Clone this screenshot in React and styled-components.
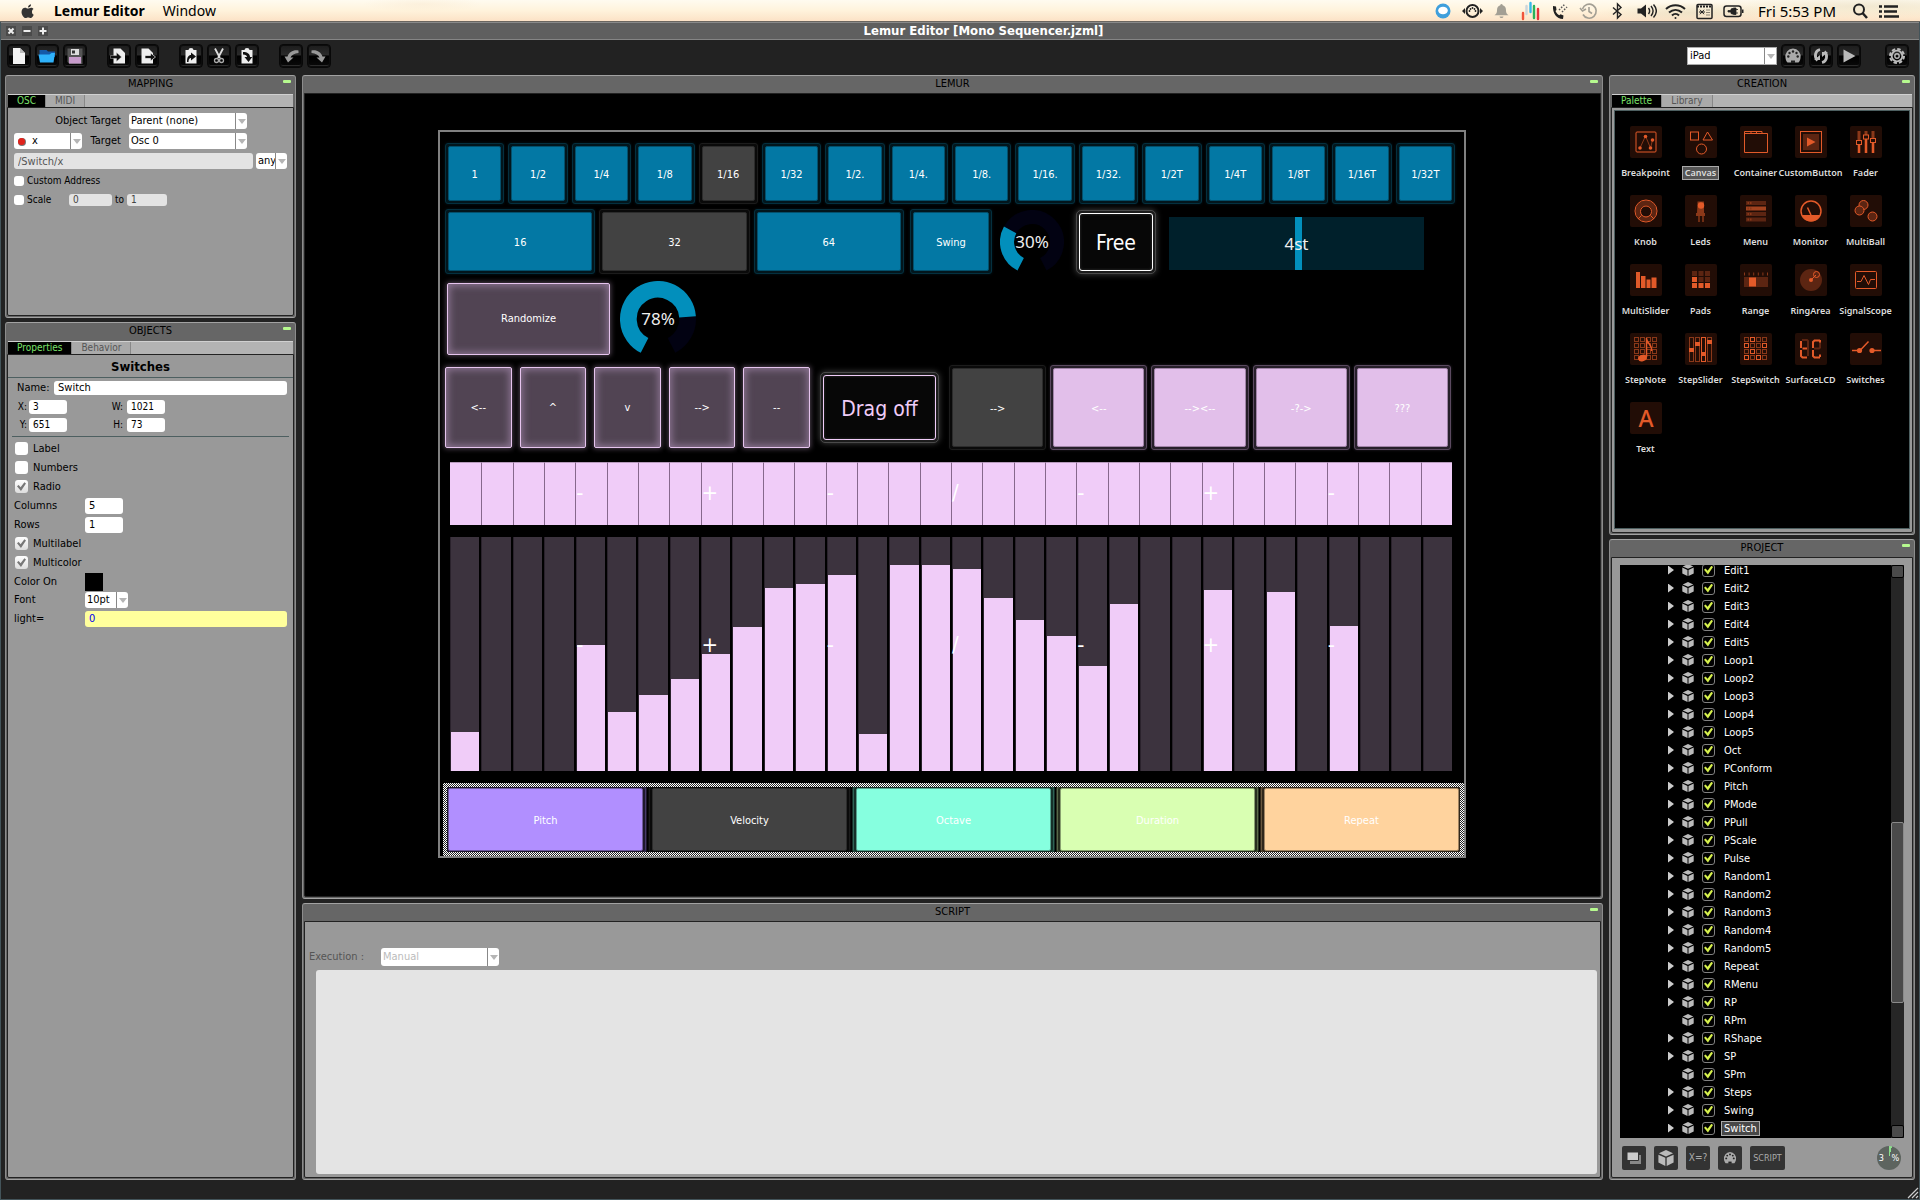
import React from "react";
import styled, { createGlobalStyle, css } from "styled-components";

const UI = `"DejaVu Sans Condensed", "Noto Sans", sans-serif`;
const MENU = `"Noto Sans", "Open Sans", sans-serif`;

const GlobalStyle = createGlobalStyle`
  *, *::before, *::after { box-sizing: border-box; }
  html, body { margin: 0; background: #222; }
  body { font: 11px/14px ${UI}; color: #000; }
  button, input, select, textarea { font: inherit; color: inherit; margin: 0; padding: 0; border: 0; border-radius: 0; background: none; }
`;

/* ---------- desktop shell ---------- */

const Shell = styled.div`
  display: flex;
  flex-direction: column;
  height: 100vh;
  min-height: 1000px;
  min-width: 1680px;
  overflow: hidden;
`;

const MenuBar = styled.header`
  display: flex;
  align-items: center;
  flex: none;
  height: 22px;
  padding: 0 20px;
  border-bottom: 1px solid #6b6660;
  background:
    radial-gradient(ellipse 60px 8px at 22% 20%, #f6e2c455, transparent),
    radial-gradient(ellipse 90px 10px at 88% 60%, #e2d8ba88, transparent),
    radial-gradient(ellipse 160px 12px at 97% 30%, #e6dcc088, transparent),
    linear-gradient(#fffbf0, #fff3dc 50%, #fce2c6);
  font: 14px/20px ${MENU};
`;

const MenuItem = styled.button`
  margin-left: 18px;
  font-weight: ${(p) => (p.$strong ? 700 : 400)};
`;

const StatusArea = styled.div`
  display: flex;
  align-items: center;
  margin-left: auto;
  gap: 8px;
`;

const StatusIcon = styled.svg`
  width: ${(p) => p.$w || 21}px;
  height: 20px;
  display: block;
`;

const Clock = styled.time`
  font: 15px/20px ${MENU};
  padding: 0 6px;
`;

const AppWindow = styled.div`
  display: flex;
  flex-direction: column;
  flex: 1;
  min-height: 0;
  background: #222;
  border: 1px solid #43545a;
  border-top: 0;
`;

const TitleBar = styled.div`
  display: grid;
  grid-template-columns: auto 1fr;
  align-items: center;
  flex: none;
  height: 18px;
  padding: 0 5px;
  background: #5f5f5f;
  border-top: 1px solid #8a8a8a;
  border-bottom: 1px solid #858585;
`;

const WindowTitle = styled.h1`
  margin: 0;
  padding-left: 5px;
  text-align: center;
  font: bold 13px/16px ${UI};
  color: #fff;
`;

const WindowButtons = styled.div`
  display: flex;
  gap: 6px;
`;

const WindowButton = styled.button`
  display: grid;
  place-items: center;
  width: 10px;
  height: 10px;
  background: #4a4a4a;
  svg { width: 8px; height: 8px; display: block; }
`;

const Toolbar = styled.div`
  display: flex;
  align-items: center;
  flex: none;
  gap: 20px;
  height: 35px;
  padding: 0 10px 3px 6px;
`;

const ToolGroup = styled.div`
  display: flex;
  align-items: center;
  gap: 4px;
  ${(p) => p.$end && css`margin-left: auto; margin-right: 4px;`}
`;

const ToolButton = styled.button`
  display: grid;
  place-items: center;
  width: 24px;
  height: 24px;
  border-radius: 4px;
  border: 1px solid #080808;
  background: linear-gradient(#1c1c1c, #2a2a2a 45%, #000 50%, #0a0a0a);
  box-shadow: inset 0 0 0 1px #0c0c0c, inset 0 -2px 0 #2c2c2c;
  svg { width: 20px; height: 20px; display: block; }
`;

const Workspace = styled.main`
  display: grid;
  grid-template-columns: 291px minmax(0, 1fr) 306px;
  gap: 6px;
  flex: 1;
  min-height: 0;
  padding: 0 4px 0 4px;
`;

const Column = styled.div`
  display: flex;
  flex-direction: column;
  gap: 4px;
  min-height: 0;
`;

const Footer = styled.footer`
  display: flex;
  justify-content: flex-end;
  align-items: flex-end;
  flex: none;
  height: 19px;
  svg { width: 12px; height: 12px; display: block; }
`;

/* ---------- panels ---------- */

const PanelBox = styled.section`
  display: flex;
  flex-direction: column;
  flex: ${(p) => (p.$height ? `0 0 ${p.$height}px` : "1")};
  min-height: 0;
  padding: 0 1px 1px;
  background: #666;
  border: 1px solid #8c8c8c;
  border-top-color: #a2a2a2;
  border-bottom-color: #a2a2a2;
  border-radius: 3px;
`;

const PanelHead = styled.div`
  display: grid;
  grid-template-columns: 1fr auto 1fr;
  flex: none;
  height: 17px;
  line-height: 15px;
  padding: 0 3px;
`;

const PanelTitle = styled.h2`
  grid-column: 2;
  margin: 0;
  font: 11px/16px ${UI};
`;

const Minimize = styled.button`
  justify-self: end;
  width: 8px;
  height: 3px;
  margin-top: 4px;
  border-radius: 1px;
  background: #b6f98f;
`;

const PanelBody = styled.div`
  display: flex;
  flex-direction: column;
  flex: 1;
  min-height: 0;
  background: ${(p) => p.$bg || "#999"};
  border: 1px solid #222;
  border-radius: 0 0 2px 2px;
  padding: ${(p) => p.$pad || 0};
`;

const TabStrip = styled.div`
  display: flex;
  flex: none;
  height: 13px;
  margin: 1px 1px 0;
  background: #b3b3b3;
  border-top: 1px solid #d0d0d0;
`;

const Tab = styled.button`
  padding: 0 9px;
  font-size: 10px;
  line-height: 12px;
  border-right: 1px solid #888;
  ${(p) =>
    p.$on
      ? css`background: #000; color: #7be06a;`
      : css`background: #aaa; color: #555;`}
`;

function Panel({ title, tabs, height, bg, pad, children }) {
  return (
    <PanelBox $height={height} aria-label={title}>
      <PanelHead>
        <PanelTitle>{title}</PanelTitle>
        <Minimize aria-label={`Minimize ${title}`} />
      </PanelHead>
      {tabs && (
        <TabStrip role="tablist">
          {tabs.map((t, i) => (
            <Tab key={t} role="tab" aria-selected={i === 0} $on={i === 0}>{t}</Tab>
          ))}
        </TabStrip>
      )}
      <PanelBody $bg={bg} $pad={pad}>{children}</PanelBody>
    </PanelBox>
  );
}

/* ---------- form parts ---------- */

const Row = styled.div`
  display: flex;
  align-items: center;
  flex: none;
  height: ${(p) => p.$h || 19}px;
`;

const Spacer = styled.span`
  flex: 0 0 ${(p) => p.$w}px;
`;

const Caption = styled.label`
  flex: none;
  width: ${(p) => (p.$w ? `${p.$w}px` : "auto")};
  padding: 0 ${(p) => p.$padX || 0}px;
  text-align: ${(p) => (p.$right ? "right" : "left")};
  color: ${(p) => p.$color || "inherit"};
  font-size: ${(p) => (p.$small ? 10 : 11)}px;
`;

const TextBox = styled.input`
  flex: ${(p) => (p.$w ? `0 0 ${p.$w}px` : "1")};
  min-width: 0;
  width: ${(p) => (p.$w ? `${p.$w}px` : "auto")};
  height: ${(p) => p.$h || 16}px;
  padding: 0 4px;
  border-radius: 3px;
  background: ${(p) => p.$bg || "#fff"};
  color: ${(p) => p.$color || "#000"};
  font-size: ${(p) => (p.$small ? 10 : 11)}px;
`;

const SelectWrap = styled.span`
  display: flex;
  flex: none;
  width: ${(p) => p.$w}px;
  height: ${(p) => p.$h || 16}px;
  border-radius: ${(p) => (p.$square ? 0 : 3)}px;
  border: ${(p) => (p.$square ? "1px solid #aaa" : "0")};
  background: #fff;
  overflow: hidden;
  align-items: center;
  > svg { width: 10px; height: 10px; margin: 0 4px 0 2px; flex: none; }
  select {
    flex: 1;
    min-width: 0;
    height: 100%;
    padding-left: 2px;
    appearance: none;
    outline: 0;
    color: ${(p) => p.$color || "#000"};
    opacity: 1;
  }
`;

const SelectArrow = styled.span`
  display: grid;
  place-items: center;
  flex: none;
  width: 12px;
  height: 100%;
  border-left: 1px solid #888;
  &::before {
    content: "";
    border: 4px solid transparent;
    border-top: 5px solid #b5b5b5;
    border-bottom: 0;
  }
`;

function Select({ id, value, icon, label, disabled, ...rest }) {
  return (
    <SelectWrap {...rest}>
      {icon}
      <select id={id} aria-label={label} defaultValue={value} disabled={disabled}>
        <option>{value}</option>
      </select>
      <SelectArrow />
    </SelectWrap>
  );
}

const Check = styled.input.attrs({ type: "checkbox" })`
  appearance: none;
  flex: none;
  display: grid;
  place-items: center;
  width: ${(p) => p.$size || 13}px;
  height: ${(p) => p.$size || 13}px;
  border-radius: 3px;
  background: ${(p) => (p.$dark ? "#000" : "#fff")};
  border: ${(p) => (p.$dark ? "1px solid #808080" : "0")};
  &:checked {
    background: ${(p) => (p.$dark ? "#000" : "linear-gradient(#fff, #ddd)")};
  }
  &:checked::before {
    content: "";
    width: 9px;
    height: 9px;
    background: ${(p) => (p.$dark ? "#d6f04c" : "#777")};
    clip-path: polygon(0 48%, 18% 34%, 40% 58%, 82% 4%, 100% 16%, 44% 100%);
  }
`;

/* ---------- mapping / objects ---------- */

const MappingForm = styled.form`
  display: flex;
  flex-direction: column;
  padding: 3px 6px;
`;

const ObjectsForm = styled.form`
  display: flex;
  flex-direction: column;
`;

const ObjectName = styled.h3`
  margin: 0;
  padding-right: 20px;
  height: 23px;
  text-align: center;
  font: bold 13px/23px ${UI};
  border-bottom: 1px solid #4d5f60;
`;

const Fields = styled.div`
  padding: 0 6px;
`;

const Divider = styled.hr`
  margin: 2px 4px 2px;
  border: 0;
  height: 1px;
  background: #4d5f60;
`;

const Swatch = styled.button`
  width: 18px;
  height: 18px;
  background: #000;
`;

function Mapping() {
  return (
    <Panel title="MAPPING" tabs={["OSC", "MIDI"]} height={243}>
      <MappingForm>
        <Row $h={20}>
          <Caption htmlFor="objTarget" $w={115} $padX={8} $right>Object Target</Caption>
          <Select id="objTarget" value="Parent (none)" $w={118} />
        </Row>
        <Row $h={20}>
          <Select
            label="Variable"
            value="x"
            $w={68}
            icon={<svg viewBox="0 0 10 10"><circle cx="6" cy="6" r="4" fill="#777" /><circle cx="5.500" cy="5.500" r="3.500" fill="#e0231c" /></svg>}
          />
          <Caption htmlFor="oscTarget" $w={47} $padX={8} $right>Target</Caption>
          <Select id="oscTarget" value="Osc 0" $w={118} />
        </Row>
        <Row $h={20}>
          <TextBox aria-label="OSC address" defaultValue="/Switch/x" $bg="#e3e3e3" $color="#555" />
          <Spacer $w={3} />
          <Select label="Trigger" value="any" $w={31} />
        </Row>
        <Row>
          <Check id="custom" $size={10} />
          <Caption htmlFor="custom" $small $padX={3}>Custom Address</Caption>
        </Row>
        <Row>
          <Check id="scale" $size={10} />
          <Caption htmlFor="scale" $small $w={45} $padX={3}>Scale</Caption>
          <TextBox aria-label="Scale from" defaultValue="0" $w={43} $h={12} $small $bg="#e3e3e3" $color="#444" />
          <Caption htmlFor="scaleTo" $small $padX={3}>to</Caption>
          <TextBox id="scaleTo" defaultValue="1" $w={40} $h={12} $small $bg="#e3e3e3" $color="#444" />
        </Row>
      </MappingForm>
    </Panel>
  );
}

function CheckRow({ label, on }) {
  const id = `p-${label}`;
  return (
    <Row>
      <Spacer $w={1} />
      <Check id={id} defaultChecked={on} />
      <Caption htmlFor={id} $padX={5}>{label}</Caption>
    </Row>
  );
}

function Objects() {
  return (
    <Panel title="OBJECTS" tabs={["Properties", "Behavior"]}>
      <ObjectsForm>
        <ObjectName>Switches</ObjectName>
        <Fields>
          <Row $h={20}>
            <Caption htmlFor="name" $w={40} $padX={3}>Name:</Caption>
            <TextBox id="name" defaultValue="Switch" $h={14} />
          </Row>
          <Row $h={18}>
            <Caption htmlFor="px" $w={15} $padX={2} $right $small>X:</Caption>
            <TextBox id="px" defaultValue="3" $w={38} $h={14} $small />
            <Caption htmlFor="pw" $w={60} $padX={4} $right $small>W:</Caption>
            <TextBox id="pw" defaultValue="1021" $w={38} $h={14} $small />
          </Row>
          <Row $h={18}>
            <Caption htmlFor="py" $w={15} $padX={2} $right $small>Y:</Caption>
            <TextBox id="py" defaultValue="651" $w={38} $h={14} $small />
            <Caption htmlFor="ph" $w={60} $padX={4} $right $small>H:</Caption>
            <TextBox id="ph" defaultValue="73" $w={38} $h={14} $small />
          </Row>
        </Fields>
        <Divider />
        <Fields>
          <CheckRow label="Label" />
          <CheckRow label="Numbers" />
          <CheckRow label="Radio" on />
          <Row>
            <Caption htmlFor="cols" $w={71}>Columns</Caption>
            <TextBox id="cols" defaultValue="5" $w={38} />
          </Row>
          <Row>
            <Caption htmlFor="rows" $w={71}>Rows</Caption>
            <TextBox id="rows" defaultValue="1" $w={38} />
          </Row>
          <CheckRow label="Multilabel" on />
          <CheckRow label="Multicolor" on />
          <Row>
            <Caption htmlFor="color" $w={71}>Color On</Caption>
            <Swatch id="color" type="button" />
          </Row>
          <Row $h={18}>
            <Caption htmlFor="font" $w={71}>Font</Caption>
            <Select id="font" value="10pt" $w={43} />
          </Row>
          <Row>
            <Caption htmlFor="light" $w={71}>light=</Caption>
            <TextBox id="light" defaultValue="0" $bg="#ffff9c" $color="#00e" />
          </Row>
        </Fields>
      </ObjectsForm>
    </Panel>
  );
}

/* ---------- surface ---------- */

const Stage = styled.div`
  display: grid;
  place-content: center;
  flex: 1;
  padding: 0 1px 2px 0;
`;

const Surface = styled.div`
  display: flex;
  flex-direction: column;
  width: 1028px;
  height: 728px;
  padding-top: 11px;
  border: 2px solid #808080;
  background: #000;
  color: #fff;
`;

const Line = styled.div`
  display: flex;
  align-items: center;
  flex: none;
  height: ${(p) => p.$h}px;
  margin: 0 ${(p) => p.$right || 0}px ${(p) => p.$below}px 5px;
`;

const PadRow = styled.div`
  display: grid;
  grid-auto-flow: column;
  grid-auto-columns: minmax(0, 1fr);
  gap: ${(p) => p.$gap || 4}px;
  flex: ${(p) => (p.$w ? `0 0 ${p.$w}px` : 1)};
  height: ${(p) => (p.$h ? `${p.$h}px` : "100%")};
  margin: 0 ${(p) => p.$after || 0}px 0 ${(p) => p.$before || 0}px;
`;

const tones = {
  blue: ["#0378a4", "#04506c", "#02161d", "#04303f"],
  gray: ["#424242", "#2c2c2c", "#0a0a0a", "#1c1c1c"],
  pink: ["#e2bfea", "#a184a8", "#271f2a", "#5b4a60"],
  violet: ["#b18fff", "#6f5a9f", "#1f182e", "#46396a"],
  aqua: ["#86ffdf", "#54a08c", "#163029", "#2f6355"],
  lime: ["#d9ffb2", "#88a06f", "#283020", "#59694a"],
  peach: ["#ffd39e", "#a08463", "#30271b", "#69573f"],
};

const Pad = styled.button`
  border-radius: 3px;
  border: 1px solid ${(p) => tones[p.$tone][3]};
  padding: 2px;
  background: ${(p) => tones[p.$tone][2]};
  box-shadow: 0 0 3px ${(p) => tones[p.$tone][2]};
  > span {
    display: grid;
    place-items: center;
    height: 100%;
    padding-top: 2px;
    border: 1px solid ${(p) => tones[p.$tone][1]};
    border-radius: 2px;
    background: ${(p) => tones[p.$tone][0]};
  }
`;

const GlowPad = styled.button`
  border: 1px solid #e6c4ee;
  border-radius: 2px;
  background: #514453;
  box-shadow: 0 0 5px 1px #4d404f, inset 0 0 7px 2px #8a7390;
`;

const Outline = styled.button`
  flex: 0 0 ${(p) => p.$w}px;
  height: ${(p) => p.$h}px;
  margin-right: ${(p) => p.$after || 0}px;
  padding: 2px;
  border: 1px solid #4a4a4a;
  border-radius: 5px;
  background: #1c1c1c;
  box-shadow: 0 0 6px #444;
  color: ${(p) => p.$color};
  font-size: 21px;
  > span {
    display: grid;
    place-items: center;
    height: 100%;
    padding-top: 2px;
    border: 1px solid currentColor;
    border-radius: 3px;
    background: #070707;
    box-shadow: inset 0 0 3px #333;
  }
`;

const readout = css`
  font: 17px/20px "Noto Sans", sans-serif;
  color: #eee;
`;

const KnobBox = styled.div`
  display: grid;
  place-items: center;
  flex: 0 0 ${(p) => p.$size}px;
  height: ${(p) => p.$size}px;
  margin-right: ${(p) => p.$after || 0}px;
  > * { grid-area: 1 / 1; }
  output { ${readout} }
`;

function Knob({ size, value, after }) {
  const r = 39;
  const at = (deg) => {
    const a = ((deg + 90) * Math.PI) / 180;
    return [50 + r * Math.cos(a), 50 + r * Math.sin(a)];
  };
  const arc = (from, to) => {
    const [x1, y1] = at(from);
    const [x2, y2] = at(to);
    return `M${x1} ${y1}A${r} ${r} 0 ${to - from > 180 ? 1 : 0} 1 ${x2} ${y2}`;
  };
  const end = 27 + 306 * (value / 100);
  return (
    <KnobBox $size={size} $after={after}>
      <svg width={size} height={size} viewBox="0 0 100 100" fill="none" strokeWidth="22">
        <path d={arc(end, 333)} stroke="#020212" />
        <path d={arc(27, end)} stroke="#028fbc" />
      </svg>
      <output>{value}%</output>
    </KnobBox>
  );
}

const SliderBox = styled.div`
  display: grid;
  place-items: center;
  flex: 0 0 255px;
  height: 53px;
  margin-top: 4px;
  background: #00202b;
  > * { grid-area: 1 / 1; }
  input {
    appearance: none;
    width: 100%;
    height: 100%;
  }
  input::-webkit-slider-thumb {
    appearance: none;
    width: 7px;
    height: 53px;
    background: #028fbc;
  }
  output { ${readout} pointer-events: none; z-index: 1; }
`;

const Stack = styled.div`
  display: grid;
  flex: none;
  height: ${(p) => p.$h}px;
  margin: 0 12px 12px 10px;
  > * { grid-area: 1 / 1; min-height: 0; }
`;

const Steps = styled.div`
  display: grid;
  grid-template-columns: repeat(32, minmax(0, 1fr));
  column-gap: ${(p) => p.$gap || 0}px;
`;

const MarkLayer = styled(Steps)`
  pointer-events: none;
  padding-bottom: ${(p) => p.$lift}px;
`;

const StepCell = styled.button`
  background: #f0ccf8;
  border-top: 1px solid #b79bbd;
  & + & { border-left: 1px solid #86688c; }
`;

const StepBar = styled.input.attrs({ type: "range", min: 0, max: 234 })`
  appearance: none;
  writing-mode: vertical-lr;
  direction: rtl;
  width: 100%;
  height: 100%;
  border-left: 1px solid #2a222c;
  background: linear-gradient(to top, #f0ccf8 var(--level), #3c333e var(--level));
  &::-webkit-slider-thumb { appearance: none; width: 1px; height: 1px; background: transparent; }
`;

const Mark = styled.span`
  align-self: center;
  padding-left: 1px;
  font-size: 22px;
  line-height: 24px;
`;

const marks = { 4: "-", 8: "+", 12: "-", 16: "/", 20: "-", 24: "+", 28: "-" };
const levels = [39, 0, 0, 0, 126, 59, 76, 92, 117, 144, 183, 187, 196, 37, 206, 206, 202, 173, 151, 135, 105, 167, 0, 0, 181, 0, 179, 0, 145, 0, 0, 0];

const Marks = ({ lift }) => (
  <MarkLayer $lift={lift}>
    {levels.map((_, i) => <Mark key={i}>{marks[i]}</Mark>)}
  </MarkLayer>
);

const Selection = styled.div`
  flex: none;
  height: 73px;
  margin-left: 3px;
  padding: 4px;
  background: repeating-conic-gradient(#fff 0 25%, #222 0 50%) 0 0 / 2px 2px;
`;

const ModeRow = styled.div`
  display: grid;
  grid-template-columns: repeat(5, minmax(0, 1fr));
  gap: 9px;
  height: 100%;
  padding: 1px 1px;
  background: #000;
  overflow: hidden;
`;

const ModePad = styled.button`
  padding-top: 2px;
  border: 1px solid ${(p) => tones[p.$tone][1]};
  border-radius: 2px;
  background: ${(p) => tones[p.$tone][0]};
  box-shadow: 0 0 0 2px ${(p) => tones[p.$tone][2]}, 0 0 0 3px ${(p) => tones[p.$tone][3]}, 0 0 0 4px ${(p) => tones[p.$tone][2]};
`;

const rates = ["1", "1/2", "1/4", "1/8", "1/16", "1/32", "1/2.", "1/4.", "1/8.", "1/16.", "1/32.", "1/2T", "1/4T", "1/8T", "1/16T", "1/32T"];

function PadButton({ tone, children }) {
  return <Pad $tone={tone}><span>{children}</span></Pad>;
}

function Lemur() {
  return (
    <Panel title="LEMUR" bg="#000">
      <Stage>
        <Surface>
          <Line $h={61} $below={5} $right={9}>
            <PadRow>
              {rates.map((r) => <PadButton key={r} tone={r === "1/16" ? "gray" : "blue"}>{r}</PadButton>)}
            </PadRow>
          </Line>
          <Line $h={65} $below={7}>
            <PadRow $w={459} $after={6}>
              {["16", "32", "64"].map((r) => <PadButton key={r} tone={r === "32" ? "gray" : "blue"}>{r}</PadButton>)}
            </PadRow>
            <PadRow $w={82} $after={8}><PadButton tone="blue">Swing</PadButton></PadRow>
            <Knob size={64} value={30} after={12} />
            <Outline $w={80} $h={64} $after={13} $color="#fff"><span>Free</span></Outline>
            <SliderBox>
              <input type="range" aria-label="Steps" defaultValue={51} />
              <output>4st</output>
            </SliderBox>
          </Line>
          <Line $h={76} $below={8}>
            <PadRow $w={163} $h={72} $before={2} $after={10}><GlowPad>Randomize</GlowPad></PadRow>
            <Knob size={76} value={78} />
          </Line>
          <Line $h={85} $below={12}>
            <PadRow $w={365} $h={81} $gap={8} $after={10}>
              {["<--", "^", "v", "-->", "--"].map((t) => <GlowPad key={t}>{t}</GlowPad>)}
            </PadRow>
            <Outline $w={119} $h={71} $after={10} $color="#f0ccf8"><span>Drag off</span></Outline>
            <PadRow $w={502}>
              {["-->", "<--", "--><--", "-?->", "???"].map((t, i) => <PadButton key={t} tone={i ? "pink" : "gray"}>{t}</PadButton>)}
            </PadRow>
          </Line>
          <Stack $h={63}>
            <Steps>{levels.map((_, i) => <StepCell key={i} aria-label={`Step ${i + 1}`} />)}</Steps>
            <Marks lift={2} />
          </Stack>
          <Stack $h={234}>
            <Steps $gap={2}>
              {levels.map((v, i) => <StepBar key={i} aria-label={`Value ${i + 1}`} defaultValue={v} style={{ "--level": `${v}px` }} />)}
            </Steps>
            <Marks lift={18} />
          </Stack>
          <Selection>
            <ModeRow>
              <ModePad $tone="violet">Pitch</ModePad>
              <ModePad $tone="gray">Velocity</ModePad>
              <ModePad $tone="aqua">Octave</ModePad>
              <ModePad $tone="lime">Duration</ModePad>
              <ModePad $tone="peach">Repeat</ModePad>
            </ModeRow>
          </Selection>
        </Surface>
      </Stage>
    </Panel>
  );
}

/* ---------- script ---------- */

const ScriptArea = styled.textarea`
  flex: 1;
  margin: 4px 3px 3px 11px;
  border-radius: 3px;
  background: #e4e4e4;
  resize: none;
`;

function Script() {
  return (
    <Panel title="SCRIPT" height={277} pad="26px 0 0 0">
      <Row $h={18}>
        <Caption htmlFor="exec" $w={76} $padX={4} $color="#555">Execution :</Caption>
        <Select id="exec" value="Manual" disabled $w={118} $h={18} $color="#bbb" />
      </Row>
      <ScriptArea aria-label="Script" />
    </Panel>
  );
}

/* ---------- creation ---------- */

const PaletteBox = styled.div`
  display: grid;
  grid-template-columns: repeat(auto-fill, 55px);
  grid-auto-rows: 69px;
  align-content: start;
  flex: 1;
  padding: 15px 0 0 3px;
  background: #000;
  border: 1px solid #4d5f60;
`;

const PaletteItem = styled.button`
  display: flex;
  flex-direction: column;
  align-items: center;
  gap: 8px;
  > svg { width: 32px; height: 32px; flex: none; border-radius: 2px; background: #220d06; }
`;

const PaletteLabel = styled.span`
  height: 14px;
  padding: 0 2px;
  font: 600 9px/12px "Noto Sans", "Open Sans", sans-serif;
  color: #ddd;
  white-space: nowrap;
  border: 1px solid ${(p) => (p.$on ? "#aaa" : "transparent")};
  background: ${(p) => (p.$on ? "#555" : "transparent")};
`;

const O = "#e35a29";
const D = "#5c2512";
const M = "#8a3819";
const grid4 = [0, 1, 2, 3].flatMap((y) => [0, 1, 2, 3].map((x) => [x, y]));
const litSteps = ["1,0", "0,1", "3,1", "1,2", "0,3", "2,3"];

const paletteIcons = {
  Breakpoint: <><rect x="6" y="6" width="20" height="20" rx="1" stroke={O} /><path d="M10 22 15.500 10 20.500 22 22.500 14" stroke={M} /><g fill={O}><circle cx="10" cy="22" r="1.800" /><circle cx="15.500" cy="10.500" r="1.800" /><circle cx="20.500" cy="22" r="1.800" /><circle cx="22.500" cy="14" r="1.800" /></g></>,
  Canvas: <g stroke={O}><rect x="5.500" y="6" width="8" height="8" /><path d="M22.500 6 27.500 14H18z" /><circle cx="16.500" cy="23" r="5" /></g>,
  Container: <path d="M4.500 26.500V5.500H22V7.500H27.500V26.500zM4.500 7.500H11V5.500M16.500 5.500V7.500M11 7.500H22" stroke={O} />,
  CustomButton: <><rect x="5.500" y="5.500" width="21" height="21" stroke={O} /><rect x="8" y="8" width="16" height="16" fill={D} /><path d="M12 11.500 20.500 16 12 20.500z" fill={O} /></>,
  Fader: <><path d="M9 5V27M16 5V27M23 5V27" stroke={M} strokeWidth="3" /><path d="M9 19V27M16 13V27M23 17V27" stroke={O} strokeWidth="2" /><g stroke={O} fill="#220d06"><rect x="6.500" y="14.500" width="5" height="4" /><rect x="13.500" y="9" width="5" height="4" /><rect x="20.500" y="12.500" width="5" height="4" /></g></>,
  Knob: <g stroke={O}><circle cx="16" cy="16" r="8" stroke={D} strokeWidth="5" /><circle cx="16" cy="16" r="11" /><circle cx="16" cy="16.500" r="5.500" /><path d="M11.500 20.500 8 24M20.500 20.500 24 24" /></g>,
  Leds: <><path d="M12.500 6.500h6.500v12h-7zM11 18h9v3h-9z" fill={M} /><circle cx="16" cy="10.500" r="3.200" fill={O} /><path d="M14 19V27M18 19V27" stroke={M} strokeWidth="1.500" /></>,
  Menu: <><g fill={D}><rect x="6" y="6" width="20" height="4" /><rect x="6" y="17" width="20" height="4" /><rect x="6" y="22.500" width="20" height="4" /></g><rect x="6" y="11.500" width="20" height="4" fill="#a2431f" /><path d="M7.500 8h4M7.500 13.500h4M7.500 19h4M7.500 24.500h4" stroke={M} strokeDasharray="1.500 1" strokeWidth="2" /></>,
  Monitor: <><circle cx="16" cy="16" r="10" stroke={O} strokeWidth="1.500" /><path d="M6.500 20H25.500A10.300 10.300 0 0 1 6.500 20z" fill={O} /><path d="M16 20 12.500 12.500" stroke={O} strokeWidth="1.500" /></>,
  MultiBall: <g stroke={O} fill={D}><circle cx="13.500" cy="10" r="4.500" /><circle cx="9.500" cy="15.500" r="4.500" /><circle cx="22.500" cy="21.500" r="4.500" /></g>,
  MultiSlider: <path d="M6 8h4v16H6zM11 12h4.500v12H11zM16.500 15.500h4V24h-4zM21.500 13.500h5V24h-5z" fill={O} />,
  Pads: <>{[0, 1, 2].flatMap((y) => [0, 1, 2].map((x) => <rect key={`${x}${y}`} x={7 + x * 6.5} y={7 + y * 6} width="5" height="5" fill={y === 2 || (y === 1 && x === 0) ? O : D} />))}</>,
  Range: <><rect x="4" y="13" width="24" height="10" fill={D} /><rect x="9" y="13.500" width="7" height="9" fill={O} /><path d="M4 10H28" stroke={M} strokeWidth="3" strokeDasharray="1 3.600" /></>,
  RingArea: <><circle cx="16" cy="16" r="11" fill={D} /><circle cx="21.500" cy="10.500" r="3" stroke={O} /><path d="M16 16 21 11" stroke={O} /><circle cx="16" cy="16" r="2" fill={O} /></>,
  SignalScope: <g stroke={O}><rect x="5.500" y="7.500" width="21" height="17" rx="1" /><path d="M7 17.500h4l3-6 4.500 9 2-5h4.500" /></g>,
  StepNote: <><g stroke={M}>{grid4.map(([x, y]) => <rect key={`${x}${y}`} x={4.5 + x * 6} y={4.5 + y * 6} width="4" height="4" />)}</g><path d="M16.500 5V24M16.500 6c1 5 6 6 5 12" stroke={O} strokeWidth="1.500" /><ellipse cx="12.500" cy="25" rx="4.500" ry="3.300" fill={O} transform="rotate(-20 12.500 25)" /></>,
  StepSlider: <><g stroke={M}><rect x="4.500" y="4.500" width="4" height="24" /><rect x="10.500" y="4.500" width="4" height="24" /><rect x="16.500" y="4.500" width="4" height="24" stroke={O} /><rect x="22.500" y="4.500" width="4" height="24" /></g><path d="M4 15h5v4H4zM10 9h5v4h-5zM16 19h5v4h-5zM22 7h5v4h-5z" fill={O} /></>,
  StepSwitch: <>{grid4.map(([x, y]) => <rect key={`${x}${y}`} x={4.5 + x * 6} y={4.5 + y * 6} width="4" height="4" stroke={litSteps.includes(`${x},${y}`) ? O : M} />)}</>,
  SurfaceLCD: <><path d="M7 7h5l1 1v15M19 15.500h5l1-1V8" stroke={D} strokeWidth="2" /><path d="M6 8V15M6 17V23l1.500 1.500H12M7.500 15.500H12M25 7.500H19.500L18 9V15M18 17V23l1.500 1.500H25M25 21.500V24M25 7V9.500" stroke={O} strokeWidth="2" /></>,
  Switches: <><path d="M2 17.500H10L18.500 8.500M22 17.500H31" stroke={O} strokeWidth="1.500" /><circle cx="9.500" cy="17.500" r="2.600" fill={O} /><circle cx="22" cy="17.500" r="2.600" fill={O} /></>,
  Text: <text x="16" y="25" textAnchor="middle" fontFamily="Noto Sans, sans-serif" fontSize="23" fontWeight="500" fill={O}>A</text>,
};

function Creation() {
  return (
    <Panel title="CREATION" tabs={["Palette", "Library"]} height={460} pad="2px 2px 3px">
      <PaletteBox>
        {Object.entries(paletteIcons).map(([name, art]) => (
          <PaletteItem key={name}>
            <svg viewBox="0 0 32 32" fill="none" aria-hidden="true">{art}</svg>
            <PaletteLabel $on={name === "Canvas"}>{name}</PaletteLabel>
          </PaletteItem>
        ))}
      </PaletteBox>
    </Panel>
  );
}

/* ---------- project ---------- */

const TreeFrame = styled.div`
  display: flex;
  flex: 1;
  min-height: 0;
  background: #000;
`;

const Tree = styled.ul`
  display: flex;
  flex-direction: column;
  justify-content: flex-end;
  flex: 1;
  min-height: 0;
  margin: 0;
  padding: 0 0 1px 48px;
  list-style: none;
  overflow: hidden;
  color: #fff;
`;

const TreeRow = styled.li`
  display: grid;
  grid-template-columns: 6px 12px 14px auto;
  column-gap: 8px;
  align-items: center;
  justify-content: start;
  flex: none;
  height: 18px;
`;

const Twisty = styled.button`
  width: 6px;
  height: 9px;
  background: #ccc;
  clip-path: polygon(0 0, 100% 50%, 0 100%);
  visibility: ${(p) => (p.$hide ? "hidden" : "visible")};
`;

const TreeLabel = styled.label`
  padding: 0 2px;
  margin-left: -3px;
  line-height: 13px;
  border: 1px solid ${(p) => (p.$on ? "#aaa" : "transparent")};
  background: ${(p) => (p.$on ? "#484848" : "transparent")};
`;

const ScrollTrack = styled.div`
  display: flex;
  flex-direction: column;
  width: 13px;
  background: #262626;
`;

const ScrollEnd = styled.button`
  flex: none;
  height: 13px;
  border: 1px solid #000;
  border-radius: 2px;
  background: #4a4a4a;
`;

const ScrollThumb = styled.div`
  flex: 180;
  border: 1px solid #8a8a8a;
  border-radius: 2px;
  background: #4a4a4a;
`;

const ScrollSpace = styled.div`
  flex: ${(p) => p.$n};
`;

const ProjectBar = styled.div`
  display: flex;
  align-items: center;
  gap: 8px;
  flex: none;
  height: 39px;
  padding: 1px 3px 0 2px;
`;

const ProjectButton = styled.button`
  display: grid;
  place-items: center;
  width: ${(p) => p.$w || 24}px;
  height: 24px;
  border-radius: 2px;
  background: #333;
  color: #aaa;
  font-size: ${(p) => (p.$w ? 9 : 10)}px;
  svg { width: 16px; height: 16px; }
`;

const Load = styled.div`
  display: grid;
  place-items: center;
  margin-left: auto;
  width: 24px;
  height: 24px;
  border-radius: 50%;
  background: conic-gradient(#8be08b 0 4%, #5d645f 4%);
  color: #fff;
  font-size: 9px;
  white-space: pre;
`;

const CubeIcon = () => (
  <svg viewBox="0 0 12 12" width="12" height="12" fill="#bbb" aria-hidden="true">
    <path d="M6 0 11.300 2.400 6 4.800.7 2.400zM.3 3.500 5.500 5.900V12L.3 9.400zM11.700 3.500 6.500 5.900V12L11.700 9.400z" />
  </svg>
);

const MidiShape = ({ c }) => (
  <>
    <path d="M10 2.500a8 8 0 0 1 7.500 9.500c-.3 2-1 3.500-2 4.500H4.500c-1-1-1.700-2.500-2-4.500A8 8 0 0 1 10 2.500z" fill={c} />
    <g fill="#222"><circle cx="5.300" cy="10.500" r="1.200" /><circle cx="6.500" cy="7" r="1.200" /><circle cx="10" cy="5.500" r="1.200" /><circle cx="13.500" cy="7" r="1.200" /><circle cx="14.700" cy="10.500" r="1.200" /><rect x="8" y="14.500" width="4" height="2.500" /></g>
  </>
);

const tree = ["Edit1", "Edit2", "Edit3", "Edit4", "Edit5", "Loop1", "Loop2", "Loop3", "Loop4", "Loop5", "Oct", "PConform", "Pitch", "PMode", "PPull", "PScale", "Pulse", "Random1", "Random2", "Random3", "Random4", "Random5", "Repeat", "RMenu", "RP", "RPm", "RShape", "SP", "SPm", "Steps", "Swing", "Switch"];

function Project() {
  return (
    <Panel title="PROJECT" pad="7px 8px 0">
      <TreeFrame>
        <Tree>
          {tree.map((n) => (
            <TreeRow key={n}>
              <Twisty $hide={n === "RPm" || n === "SPm"} aria-label={`Expand ${n}`} />
              <CubeIcon />
              <Check id={`t-${n}`} $dark defaultChecked />
              <TreeLabel htmlFor={`t-${n}`} $on={n === "Switch"}>{n}</TreeLabel>
            </TreeRow>
          ))}
        </Tree>
        <ScrollTrack>
          <ScrollEnd aria-label="Scroll up" />
          <ScrollSpace $n={244} />
          <ScrollThumb />
          <ScrollSpace $n={122} />
          <ScrollEnd aria-label="Scroll down" />
        </ScrollTrack>
      </TreeFrame>
      <ProjectBar>
        <ProjectButton aria-label="Create container">
          <svg viewBox="0 0 16 16"><path d="M4 5h11v9H4z" fill="#888" /><path d="M1 2h11.500v8.500H1z" fill="#ccc" stroke="#333" /></svg>
        </ProjectButton>
        <ProjectButton aria-label="Create object"><CubeIcon /></ProjectButton>
        <ProjectButton>X=?</ProjectButton>
        <ProjectButton aria-label="MIDI"><svg viewBox="0 0 20 20"><MidiShape c="#aaa" /></svg></ProjectButton>
        <ProjectButton $w={35}>SCRIPT</ProjectButton>
        <Load>{"3   %"}</Load>
      </ProjectBar>
    </Panel>
  );
}

/* ---------- toolbar icons ---------- */

const doc = <path d="M4.500 2.500h7L16 7v10.500H4.500z" fill="#eee" />;
const clip = <path d="M4.500 4h3a2.500 2 0 0 1 5 0h3v13.500h-11z" fill="#eee" />;

const toolIcons = [
  [
    ["New", <><path d="M4 2h7l5 5v11H4z" fill="#f2f2f2" /><path d="M11 2v5h5z" fill="#bbb" /></>],
    ["Open", <><path d="M2.500 4h7l1.500 1.500h7V11H2.500z" fill="#1559a8" /><path d="M1.500 8.500h11l2-1.500h3.500l-1.500 9.500H3z" fill="#2fb2fb" /></>],
    ["Save", <><path d="M2.500 2.500h15v15.500h-13l-2-2z" fill="#555" /><path d="M4 11h12v6.500H4z" fill="#c79bcb" /><path d="M6 3h8v6H6z" fill="#ddd" /><path d="M7 4.500h3v3H7z" fill="#333" /></>],
  ],
  [
    ["Import", <>{doc}<path d="M1.500 9.500h6V6.500l5 4.500-5 4.500v-3h-6z" fill="#111" stroke="#ddd" strokeWidth=".4" /></>],
    ["Export", <>{doc}<path d="M8 9.500h5.500V7l5 4-5 4v-2.500H8z" fill="#111" stroke="#eee" strokeWidth=".7" /></>],
  ],
  [
    ["Copy", <>{clip}<path d="M6 16c0-5 1.500-7 4-7V6.500l5 4-5 4V12c-1.500 0-2.500 1.500-2.500 4z" fill="#111" /></>],
    ["Cut", <><path d="M6 2.500 11 12M14 2.500 9 12" stroke="#ddd" strokeWidth="1.800" /><circle cx="7.500" cy="14.500" r="2" stroke="#aaa" fill="none" strokeWidth="1.300" /><circle cx="12.500" cy="14.500" r="2" stroke="#aaa" fill="none" strokeWidth="1.300" /></>],
    ["Paste", <>{clip}<path d="M6 6c4.500 0 7 2 7 5h2.300L11.500 16 7.500 11H10c0-1.500-1.500-2.500-4-2.500z" fill="#111" /></>],
  ],
  [
    ["Undo", <path d="M17.500 4.500c-5-1-9.500 1.500-11 6H3.500l3.500 6 5.500-5H9.500c1-2.500 4-4 8-4.500z" fill="#999" />],
    ["Redo", <path d="M2.500 4.500c5-1 9.500 1.500 11 6h3l-3.500 6-5.500-5h3c-1-2.500-4-4-8-4.500z" fill="#999" />],
  ],
];

const Tool = ({ label, children }) => (
  <ToolButton aria-label={label}><svg viewBox="0 0 20 20">{children}</svg></ToolButton>
);

/* ---------- menu bar icons ---------- */

const K = "#222";
const statusIcons = [
  <><circle cx="10" cy="10" r="7.500" fill="#3f9fdc" /><ellipse cx="10" cy="9.500" rx="4.800" ry="3.800" fill="#fff" /></>,
  <><circle cx="10.500" cy="10" r="6" stroke={K} strokeWidth="2" fill="none" /><path d="M3 7 0 10l3 3zM18 7l3 3-3 3z" fill={K} /><g fill={K}><circle cx="7.500" cy="10" r=".9" /><circle cx="8.500" cy="8" r=".9" /><circle cx="10.500" cy="7" r=".9" /><circle cx="12.500" cy="8" r=".9" /><circle cx="13.500" cy="10" r=".9" /></g></>,
  <path d="M10.500 3c1 0 1.200.8 1.200 1.300 2.300.7 3.300 2.500 3.300 5 0 2.500.7 3.700 2.500 5h-14c1.800-1.300 2.500-2.500 2.500-5 0-2.500 1-4.300 3.300-5 0-.5.200-1.300 1.200-1.300zM8.500 15.500h4c-.5 2-3.500 2-4 0z" fill="#a39f94" />,
  <g strokeWidth="2.400" strokeLinecap="round"><path d="M3 12V18" stroke="#f0543c" /><path d="M6.500 5V13" stroke="#cbd5dc" /><path d="M10.500 2V11" stroke="#35b7e8" /><path d="M14 5V17" stroke="#2bb25a" /><path d="M18 8V18" stroke="#e8343c" /></g>,
  <><path d="M4 5 7 5.500 7.500 9 6.500 10c.8 2 2 3.300 3.800 4.200l1.200-1 3 1.300-.5 3.500C7.500 18 3.500 12 4 5z" fill={K} /><path d="M10 9 16 3M13 11 18 6" stroke="#555" strokeWidth="1.500" strokeDasharray="1.500 1.500" /></>,
  <g stroke="#a39f94" strokeWidth="1.600" fill="none"><path d="M4.500 8A7 7 0 1 1 5 13.500" /><path d="M11 6v4.500l3 2" /><path d="M2 7l2.500 3L8 8" /></g>,
  <path d="M6 6.500 14 13.500 10.500 17V3L14 6.500 6 13.500" stroke={K} strokeWidth="1.400" fill="none" />,
  <><path d="M1.500 7.500H5L10 3.500v13L5 12.500H1.500z" fill={K} /><path d="M12.500 7c1.500 2 1.500 4 0 6M15 5c2.500 3 2.500 7 0 10M17.500 3.500c3.500 4 3.500 9 0 13" stroke={K} strokeWidth="1.400" fill="none" /></>,
  <g stroke={K} strokeWidth="2" fill="none"><path d="M1 8c5.500-5 13.500-5 19 0M4 11.500c4-3.500 9-3.500 13 0M7 14.500c2-2 5-2 7 0" /><circle cx="10.500" cy="17" r="1" fill={K} stroke="none" /></g>,
  <><rect x="3" y="3.500" width="15" height="14" rx="1" stroke={K} strokeWidth="1.500" fill="none" /><path d="M3 5.500H18" stroke={K} strokeWidth="2" strokeDasharray="2 1" /><path d="M5 11h6M6 8.800l4 4.400M10 8.800l-4 4.400" stroke={K} /><path d="M12.500 9h4M12.500 11.500h4M12.500 14h4" stroke={K} strokeDasharray="1 1" /></>,
  <><rect x="1" y="5" width="17" height="10.500" rx="2.500" stroke={K} strokeWidth="1.500" fill="none" /><path d="M19 8.500h1.500v3.500H19z" fill={K} /><path d="M5 9.500h3V8l3-1h2v6.500h-2l-3-1V11H5zM13 8.500h2M13 12h2" fill={K} stroke={K} strokeWidth=".8" /></>,
];

export default function App() {
  return (
    <Shell>
      <GlobalStyle />
      <MenuBar>
        <StatusIcon viewBox="0 0 21 20" $w={16}>
          <path d="M14.500 1c.3 2-1.500 4.500-4 4.500C10.300 3.500 12 1.300 14.500 1zM18 15c-1 2.500-2.300 4.300-4 4.300-1.300 0-1.700-.8-3.300-.8-1.500 0-2 .8-3.200.8C4.700 19.300 2 14.800 2 11.300c0-3.600 2.300-5.500 4.600-5.500 1.500 0 2.800 1 3.700 1 .9 0 2.400-1.100 4.200-1.100 1.300 0 2.500.6 3.300 1.700-3 1.800-2.600 6.200.2 7.600z" fill="#333" />
        </StatusIcon>
        <MenuItem $strong>Lemur Editor</MenuItem>
        <MenuItem>Window</MenuItem>
        <StatusArea>
          {statusIcons.map((icon, i) => <StatusIcon key={i} viewBox="0 0 21 20" aria-hidden="true">{icon}</StatusIcon>)}
          <Clock>Fri 5:53 PM</Clock>
          <StatusIcon viewBox="0 0 21 20"><circle cx="9" cy="8.500" r="5" stroke={K} strokeWidth="2" fill="none" /><path d="M12.500 12 17 17" stroke={K} strokeWidth="2.500" /></StatusIcon>
          <StatusIcon viewBox="0 0 21 20"><path d="M0 5.500h3M5 5.500h14M0 10.500h3M5 10.500h13M0 15.500h3M5 15.500h15" stroke={K} strokeWidth="2.500" /></StatusIcon>
        </StatusArea>
      </MenuBar>
      <AppWindow>
        <TitleBar>
          <WindowButtons>
            {["M1.500 1.500l5 5M6.500 1.500l-5 5", "M0.500 4h7", "M4 0.500v7M0.500 4h7"].map((d, i) => (
              <WindowButton key={d} aria-label={["Close", "Minimize", "Zoom"][i]}>
                <svg viewBox="0 0 8 8"><path d={d} stroke="#eee" strokeWidth="2" /></svg>
              </WindowButton>
            ))}
          </WindowButtons>
          <WindowTitle>Lemur Editor [Mono Sequencer.jzml]</WindowTitle>
        </TitleBar>
        <Toolbar>
          {toolIcons.map((group, i) => (
            <ToolGroup key={i}>
              {group.map(([label, art]) => <Tool key={label} label={label}>{art}</Tool>)}
            </ToolGroup>
          ))}
          <ToolGroup $end>
            <Select label="Target device" value="iPad" $w={90} $h={18} $square />
            <Tool label="MIDI mapping"><MidiShape c="#aaa" /></Tool>
            <Tool label="Synchronize">
              <path d="M9 3.500C4 4.500 3 11 6.500 14.500M11 16.500c5-1 6-7.500 2.500-11" stroke="#bbb" strokeWidth="2.800" fill="none" />
              <path d="M3 14h6V9zM17 6h-6v5z" fill="#bbb" />
            </Tool>
            <Tool label="Play"><path d="M4.500 3.500 16.500 10 4.500 16.500z" fill="#bbb" /></Tool>
          </ToolGroup>
          <ToolGroup>
            <Tool label="Settings">
              <circle cx="10" cy="10" r="7" fill="none" stroke="#bbb" strokeWidth="2" strokeDasharray="3.500 2" />
              <circle cx="10" cy="10" r="5.300" fill="none" stroke="#bbb" strokeWidth="1.800" />
              <circle cx="10" cy="10" r="2.200" fill="none" stroke="#bbb" strokeWidth="1.400" />
            </Tool>
          </ToolGroup>
        </Toolbar>
        <Workspace>
          <Column><Mapping /><Objects /></Column>
          <Column><Lemur /><Script /></Column>
          <Column><Creation /><Project /></Column>
        </Workspace>
        <Footer>
          <svg viewBox="0 0 12 12"><path d="M1 11 11 1M5 11l6-6M9 11l2-2" stroke="#ccc" strokeWidth="1.200" /></svg>
        </Footer>
      </AppWindow>
    </Shell>
  );
}
